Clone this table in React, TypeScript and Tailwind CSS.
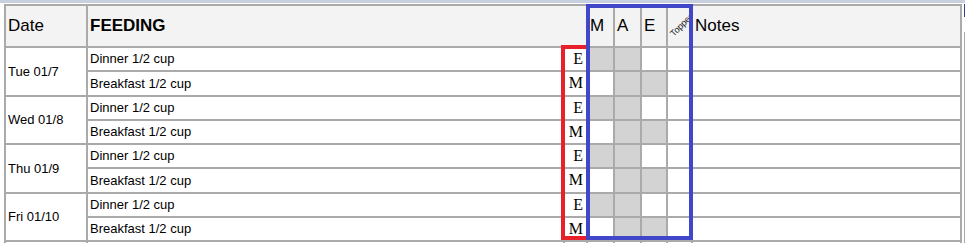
import React from 'react'

const days = ['Tue 01/7', 'Wed 01/8', 'Thu 01/9', 'Fri 01/10', '']

const meals = [
  { name: 'Dinner 1/2 cup', tag: 'E', shade: [true, true, false, false] },
  { name: 'Breakfast 1/2 cup', tag: 'M', shade: [false, true, true, false] },
]

const head = 'bg-[#f3f3f3] flex items-center px-[2px] text-[17px] text-black'

export default function App(): JSX.Element {
  return (
    <div className="h-[243px] w-[965px] overflow-hidden bg-white font-['Liberation_Sans',Arial,sans-serif]">
      <div className="h-[3px] bg-[#c8d0e0]" />
      <div className="flex mt-[1px]">
        <div className="w-[4px] shrink-0" />
        <div className="relative">
          <div className="grid grid-cols-[80px_475px_21px_25px_25px_24px_23px_267px] grid-rows-[40px_repeat(8,22.25px)_22px] gap-[2px] p-[2px] bg-[#aaaaaa]">
            <div className={head}>Date</div>
            <div className={head + ' col-span-2 font-bold'}>FEEDING</div>
            <div className={head}>M</div>
            <div className={head}>A</div>
            <div className={head}>E</div>
            <div className="bg-[#f3f3f3] flex items-center justify-center overflow-hidden">
              <span className="text-[9px] leading-none text-[#222] -rotate-45 translate-x-[2px] -translate-y-[1px]">
                Topper
              </span>
            </div>
            <div className={head}>Notes</div>

            {days.map((day, d) => (
              <React.Fragment key={d}>
                <div className="row-span-2 bg-white flex items-center px-[2px] text-[13px]">{day}</div>
                {meals.map((m, i) => (
                  <React.Fragment key={i}>
                    <div className="bg-white flex items-center px-[2px] text-[13px]">{day ? m.name : ''}</div>
                    <div className="bg-white flex items-center justify-end pr-[3px] text-[16px] font-['Liberation_Serif',serif]">
                      {day ? m.tag : ''}
                    </div>
                    {m.shade.map((s, j) => (
                      <div key={j} className={s && day ? 'bg-[#d3d3d3]' : 'bg-white'} />
                    ))}
                    <div className="bg-white" />
                  </React.Fragment>
                ))}
              </React.Fragment>
            ))}
          </div>

          {/* annotation boxes drawn over the sheet */}
          <div className="absolute left-[557px] top-[41px] w-[29px] h-[195px] border-4 border-[#e8202a]" />
          <div className="absolute left-[582px] top-0 w-[107px] h-[236px] border-4 border-[#4047c9]" />
        </div>
        <div className="w-[2px] shrink-0" />
        <div className="w-[1px] shrink-0 flex flex-col">
          <div className="h-[13px] bg-[#3a3f8f]" />
          <div className="h-[15px]" />
          <div className="flex-1 bg-[#aaaaaa]" />
        </div>
      </div>
    </div>
  )
}
